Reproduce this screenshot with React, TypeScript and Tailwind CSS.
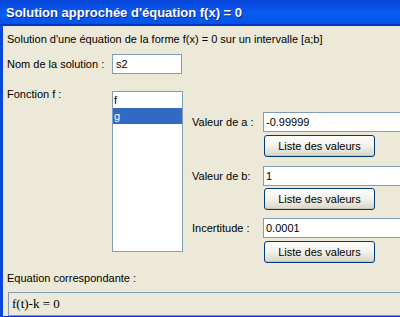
import React from "react";

const ui = { fontFamily: '"Liberation Sans", Arial, sans-serif' };

function Field({ value, className = "" }: { value: string; className?: string }) {
  return (
    <div
      className={`flex h-[20px] items-center border border-[#7f9db9] bg-white pl-[2px] text-[11px] text-black ${className}`}
    >
      {value}
    </div>
  );
}

function XpButton({ label }: { label: string }) {
  return (
    <div className="flex h-[22px] w-[111px] items-center justify-center rounded-[3px] border border-[#003c74] bg-gradient-to-b from-[#fefefe] via-[#f2f1ea] to-[#d9d6c6] text-[11px] text-black shadow-[inset_0_-1px_0_#c9c5b4]">
      {label}
    </div>
  );
}

function ValueRow({ label, value, gap }: { label: string; value: string; gap: string }) {
  return (
    <div className="flex flex-col">
      <div className="flex items-center">
        <span className="w-[71px]">{label}</span>
        <Field value={value} className="w-[160px]" />
      </div>
      <div className={`ml-[72px] ${gap}`}>
        <XpButton label="Liste des valeurs" />
      </div>
    </div>
  );
}

export default function App() {
  return (
    <div className="relative h-[317px] w-[400px] overflow-hidden bg-[#ece9d8]" style={ui}>
      <div className="flex h-[317px] w-[440px] flex-col">
        {/* title bar */}
        <div className="flex h-[26px] shrink-0 items-center bg-gradient-to-b from-[#0845d8] via-[#0a5cf2] to-[#0550e6] pl-[6px] shadow-[inset_0_-2px_0_#0036c0]">
          <span className="text-[13px] font-bold text-white [text-shadow:1px_1px_0_#0a2a8a]">
            Solution approchée d'équation f(x) = 0
          </span>
        </div>

        <div className="flex flex-1 border-b-[3px] border-l-[3px] border-b-[#0831d9] border-l-[#0846e0]">
          <div className="flex flex-1 flex-col pl-[4px] text-[11px] text-black">
            <div className="mt-[7px] h-[13px] leading-[13px]">
              Solution d'une équation de la forme f(x) = 0 sur un intervalle [a;b]
            </div>

            <div className="mt-[8px] flex items-center">
              <span className="w-[105px]">Nom de la solution :</span>
              <Field value="s2" className="w-[70px] pl-[3px]" />
            </div>

            <div className="mt-[17px] flex">
              <span className="-mt-[3px] w-[105px] leading-[13px]">Fonction f :</span>
              <div className="h-[161px] w-[71px] border border-[#7f9db9] bg-white">
                <div className="h-[16px] pl-[1px] leading-[16px]">f</div>
                <div className="h-[16px] bg-[#316ac5] pl-[1px] leading-[16px] text-white">g</div>
              </div>
              <div className="ml-[9px] mt-[21px] flex flex-col">
                <ValueRow label="Valeur de a :" value="-0.99999" gap="mt-[3px]" />
                <div className="mt-[9px]">
                  <ValueRow label="Valeur de b:" value="1" gap="mt-[2px]" />
                </div>
                <div className="mt-[8px]">
                  <ValueRow label="Incertitude :" value="0.0001" gap="mt-[3px]" />
                </div>
              </div>
            </div>

            <div className="mt-[9px] h-[13px] leading-[13px]">Equation correspondante :</div>

            <div
              className="ml-[1px] mt-[7px] flex h-[24px] items-center border border-[#7f9db9] pl-[3px] text-[13px]"
              style={{ fontFamily: '"Liberation Serif", "Times New Roman", serif' }}
            >
              f(t)-k = 0
            </div>
          </div>
        </div>
      </div>
    </div>
  );
}
